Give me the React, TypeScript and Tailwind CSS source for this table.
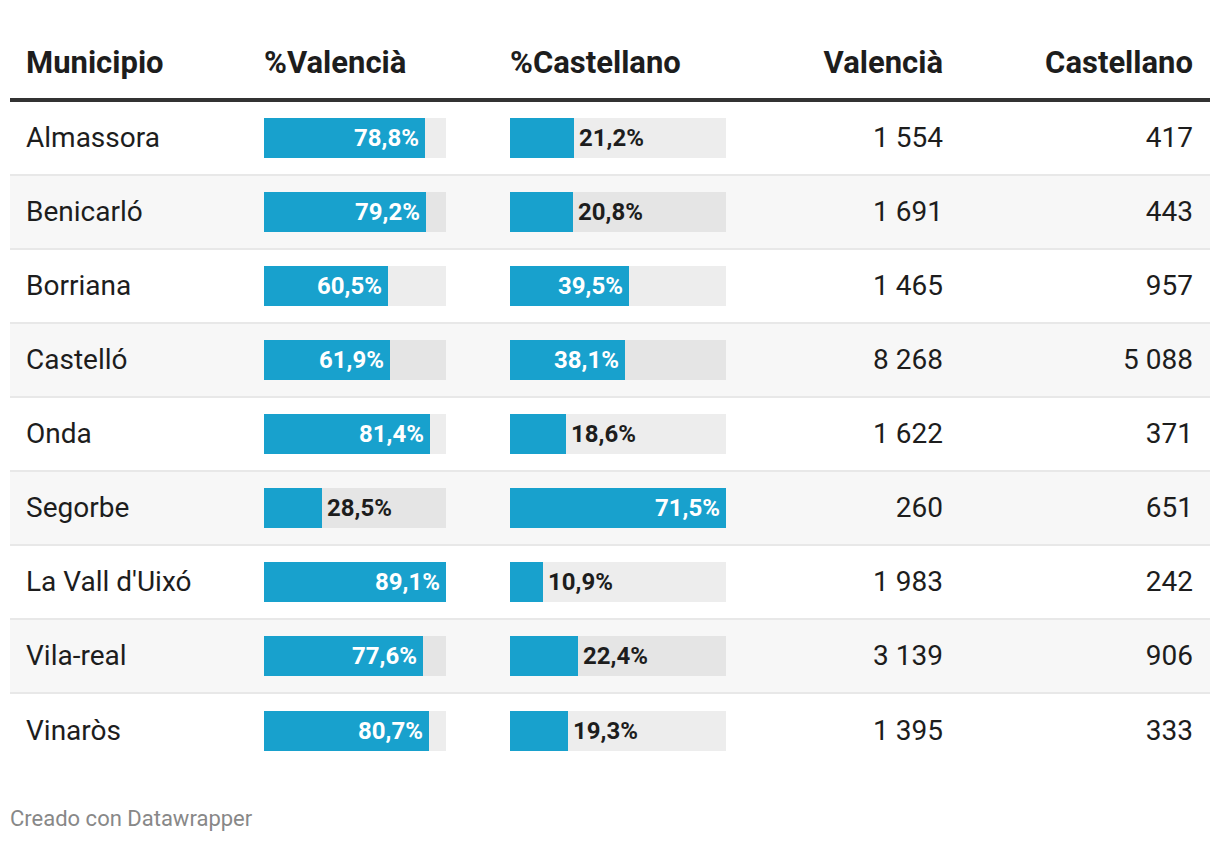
type Row = {
  name: string;
  pVal: number;
  pCas: number;
  val: string;
  cas: string;
};

const rows: Row[] = [
  { name: "Almassora", pVal: 78.8, pCas: 21.2, val: "1\u00a0554", cas: "417" },
  { name: "Benicarló", pVal: 79.2, pCas: 20.8, val: "1\u00a0691", cas: "443" },
  { name: "Borriana", pVal: 60.5, pCas: 39.5, val: "1\u00a0465", cas: "957" },
  { name: "Castelló", pVal: 61.9, pCas: 38.1, val: "8\u00a0268", cas: "5\u00a0088" },
  { name: "Onda", pVal: 81.4, pCas: 18.6, val: "1\u00a0622", cas: "371" },
  { name: "Segorbe", pVal: 28.5, pCas: 71.5, val: "260", cas: "651" },
  { name: "La Vall d'Uixó", pVal: 89.1, pCas: 10.9, val: "1\u00a0983", cas: "242" },
  { name: "Vila-real", pVal: 77.6, pCas: 22.4, val: "3\u00a0139", cas: "906" },
  { name: "Vinaròs", pVal: 80.7, pCas: 19.3, val: "1\u00a0395", cas: "333" },
];

const fmt = (v: number) => v.toFixed(1).replace(".", ",") + "%";

// barra con etiqueta: dentro (blanca) si cabe, fuera (oscura) si no
function Bar({ value, max, width }: { value: number; max: number; width: number }) {
  const w = Math.round((value / max) * width);
  const inside = w > 80;
  return (
    <div className="flex h-10 bg-black/[0.07]" style={{ width }}>
      <div
        className="flex h-full shrink-0 items-center justify-end bg-[#18a1cd] pr-[6px]"
        style={{ width: w }}
      >
        {inside && (
          <span className="text-[24px] font-bold leading-none text-white">{fmt(value)}</span>
        )}
      </div>
      {!inside && (
        <span className="flex items-center pl-[5px] text-[24px] font-bold leading-none text-[#1d1d1d]">
          {fmt(value)}
        </span>
      )}
    </div>
  );
}

const grid = "grid grid-cols-[254px_246px_216px_234px_250px]";

export default function App() {
  return (
    <div className="min-h-[842px] bg-white px-[10px] pt-[30px] font-['Roboto',sans-serif] text-[#1d1d1d]">
      <div className={`${grid} h-[72px] items-center border-b-4 border-[#333] pb-[2px] text-[31px] font-bold`}>
        <div className="pl-[16px]">Municipio</div>
        <div>%Valencià</div>
        <div>%Castellano</div>
        <div className="pr-[17px] text-right">Valencià</div>
        <div className="pr-[17px] text-right">Castellano</div>
      </div>
      {rows.map((r, i) => (
        <div
          key={r.name}
          className={`${grid} h-[74px] items-center text-[28px] ${
            i < rows.length - 1 ? "border-b-2 border-[#e8e8e8]" : ""
          } ${i % 2 === 1 ? "bg-[#f7f7f7]" : "bg-white"}`}
        >
          <div className="pl-[16px]">{r.name}</div>
          <div>
            <Bar value={r.pVal} max={89.1} width={182} />
          </div>
          <div>
            <Bar value={r.pCas} max={71.5} width={216} />
          </div>
          <div className="pr-[17px] text-right">{r.val}</div>
          <div className="pr-[17px] text-right">{r.cas}</div>
        </div>
      ))}
      <div className="mt-[34px] text-[22px] text-[#888]">Creado con Datawrapper</div>
    </div>
  );
}
